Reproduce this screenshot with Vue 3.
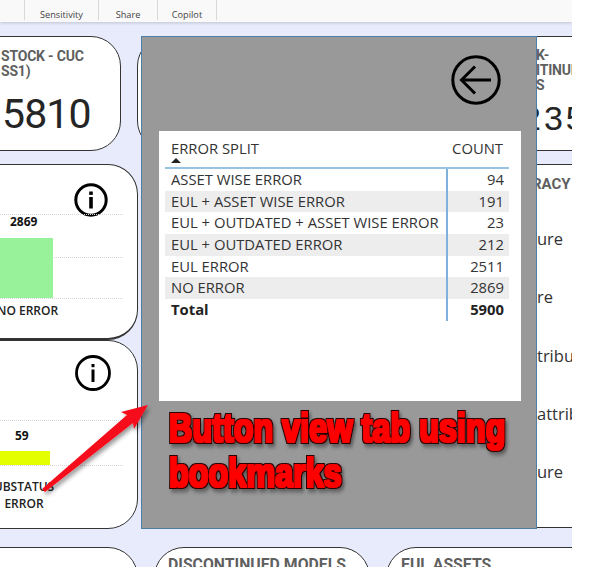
<script setup>
const rows = [
  ['ASSET WISE ERROR', 94],
  ['EUL + ASSET WISE ERROR', 191],
  ['EUL + OUTDATED + ASSET WISE ERROR', 23],
  ['EUL + OUTDATED ERROR', 212],
  ['EUL ERROR', 2511],
  ['NO ERROR', 2869]
]
const tabs = ['Sensitivity', 'Share', 'Copilot']
const fragments = ['ure', 're', 'tribu', 'attrib', 'ure']
</script>

<template>
  <div class="page">
    <div class="canvas">
      <header class="ribbon">
        <div class="tab stub"></div>
        <div v-for="t in tabs" :key="t" class="tab">{{ t }}</div>
      </header>

      <main class="board">
        <section class="row top">
          <div class="card kpi kpi-left">
            <div class="kpi-title">STOCK - CUC<br />SS1)</div>
            <div class="kpi-value">5810</div>
          </div>
          <div class="card kpi kpi-mid"></div>
          <div class="card kpi kpi-right">
            <div class="kpi-title">K-<br />ITINUE<br />S</div>
            <div class="kpi-value small">235</div>
          </div>
        </section>

        <section class="row middle">
          <div class="left-col">
            <div class="card chart chart-a">
              <svg class="info" viewBox="0 0 34 34" width="34" height="34">
                <circle cx="17" cy="17" r="15.2" fill="none" stroke="#000" stroke-width="3" />
                <rect x="15.2" y="8.5" width="3.6" height="3.4" fill="#000" />
                <rect x="15.2" y="14" width="3.6" height="11.5" fill="#000" />
              </svg>
              <div class="grid-line g1"></div>
              <div class="grid-line g2"></div>
              <div class="grid-line g3"></div>
              <div class="bar-value v1">2869</div>
              <div class="bar green"></div>
              <div class="axis a1">NO ERROR</div>
            </div>
            <div class="card chart chart-b">
              <svg class="info" viewBox="0 0 36 36" width="36" height="36">
                <circle cx="18" cy="18" r="16.5" fill="none" stroke="#000" stroke-width="2.8" />
                <rect x="16.5" y="9" width="3" height="3.2" fill="#000" />
                <rect x="16.5" y="14.5" width="3" height="12.5" fill="#000" />
              </svg>
              <div class="grid-line g4"></div>
              <div class="grid-line g5"></div>
              <div class="bar-value v2">59</div>
              <div class="bar yellow"></div>
              <div class="axis a2">UBSTATUS<br />ERROR</div>
            </div>
          </div>
          <div class="right-panel">
            <div class="panel-title">RACY</div>
            <div v-for="(f, i) in fragments" :key="i" class="panel-line">{{ f }}</div>
          </div>
        </section>

        <section class="row bottom">
          <div class="card low low-a"></div>
          <div class="card low low-b">DISCONTINUED MODELS</div>
          <div class="card low low-c">EUL ASSETS</div>
        </section>
      </main>
    </div>

    <div class="overlay">
      <div class="back">
        <svg viewBox="0 0 50 50" width="50" height="50">
          <circle cx="25" cy="25" r="23.2" fill="none" stroke="#000" stroke-width="3" />
          <path d="M40 25H10.5M24 11.5L10.5 25L24 38.5" fill="none" stroke="#000" stroke-width="3" />
        </svg>
      </div>
      <div class="table-box">
        <div class="thead">
          <div class="th-name">ERROR SPLIT<span class="sort"></span></div>
          <div class="th-count">COUNT</div>
        </div>
        <div class="tbody">
          <div v-for="r in rows" :key="r[0]" class="tr">
            <div class="td-name">{{ r[0] }}</div>
            <div class="td-count">{{ r[1] }}</div>
          </div>
          <div class="tr total">
            <div class="td-name">Total</div>
            <div class="td-count">5900</div>
          </div>
        </div>
      </div>
      <div class="callout">Button view tab using<br />bookmarks</div>
    </div>

    <svg class="arrow" width="608" height="567" viewBox="0 0 608 567">
      <defs>
        <filter id="arrow-shadow" x="-20%" y="-20%" width="140%" height="140%">
          <feDropShadow dx="2" dy="3" stdDeviation="2" flood-color="#000" flood-opacity="0.4" />
        </filter>
        <filter id="heavy-type" x="-5%" y="-15%" width="110%" height="135%">
          <feMorphology in="SourceAlpha" operator="dilate" radius="1.1 0.5" result="core" />
          <feFlood flood-color="#ff0000" />
          <feComposite in2="core" operator="in" result="red" />
          <feMorphology in="SourceAlpha" operator="dilate" radius="2.2 1.6" result="edge" />
          <feFlood flood-color="#2a0000" />
          <feComposite in2="edge" operator="in" result="dark" />
          <feOffset in="edge" dx="3" dy="3" result="moved" />
          <feGaussianBlur in="moved" stdDeviation="2" result="soft" />
          <feFlood flood-color="#000" flood-opacity="0.4" />
          <feComposite in2="soft" operator="in" result="shadow" />
          <feMerge>
            <feMergeNode in="shadow" />
            <feMergeNode in="dark" />
            <feMergeNode in="red" />
          </feMerge>
        </filter>
      </defs>
      <polygon points="42,489 127,415 121,412 148,405 134,429 133,423 45,492" fill="#f5101c" filter="url(#arrow-shadow)" />
    </svg>
  </div>
</template>

<style>
html, body { margin: 0; background: #fff; }
</style>

<style scoped>
.page {
  position: relative;
  width: 608px;
  height: 567px;
  overflow: hidden;
  background: #fff;
  font-family: "Open Sans", "Noto Sans", sans-serif;
}
.canvas {
  width: 572px;
  height: 567px;
  overflow: hidden;
  background: #e8ebfb;
}
.ribbon {
  display: flex;
  height: 22px;
  background: #f9f9f9;
  box-shadow: 0 1px 3px rgba(0, 0, 0, 0.18);
}
.tab {
  box-sizing: border-box;
  height: 20px;
  padding-top: 9px;
  border-right: 1px solid #d8d8d8;
  font-size: 9.2px;
  line-height: 12px;
  color: #444;
  text-align: center;
}
.tab.stub { width: 25px; }
.tab:nth-child(2) { width: 74px; }
.tab:nth-child(3), .tab:nth-child(4) { width: 59px; }
.board {
  display: flex;
  flex-direction: column;
  padding-top: 14px;
}
.row { display: flex; }
.card {
  box-sizing: border-box;
  flex: none;
  background: #fff;
  border: 1px solid #333;
  border-radius: 30px;
}
.top { height: 115px; margin-left: -60px; }
.kpi-left { width: 181px; padding: 12px 0 0 60px; }
.kpi-mid { width: 100px; margin-left: 16px; }
.kpi-right {
  width: 200px;
  margin-left: 298px;
  border-radius: 0;
  border-left: 0;
  padding: 11px 0 0 1px;
}
.kpi-title {
  font-family: Roboto, "Liberation Sans", sans-serif;
  font-weight: 700;
  font-size: 14px;
  line-height: 15px;
  letter-spacing: -0.2px;
  color: #5f5f5f;
}
.kpi-value {
  font-family: Roboto, "Liberation Sans", sans-serif;
  font-size: 41px;
  line-height: 44px;
  letter-spacing: -0.9px;
  color: #252525;
  margin: 13px 0 0 1px;
}
.kpi-value.small {
  font-family: "Liberation Sans", sans-serif;
  font-size: 34px;
  letter-spacing: 3px;
  margin: 0 0 0 -14px;
  padding-top: 3px;
}
.middle { height: 365px; margin-top: 13px; margin-left: -60px; }
.left-col { display: flex; flex-direction: column; width: 198px; flex: none; }
.chart { position: relative; width: 198px; }
.chart-a { height: 176px; border-bottom-width: 2px; }
.chart-b { height: 189px; }
.info { position: absolute; }
.chart-a .info { left: 133px; top: 18px; }
.chart-b .info { left: 134px; top: 14px; }
.grid-line {
  position: absolute;
  left: 40px;
  right: 14px;
  border-top: 1px dotted #d6d6d6;
}
.g1 { top: 49px; }
.g2 { top: 92px; }
.g3 { top: 133px; }
.g4 { top: 79px; }
.g5 { top: 124px; }
.bar { position: absolute; left: 40px; }
.green { top: 73px; width: 72px; height: 60px; background: #98f29a; }
.yellow { top: 110px; width: 69px; height: 14px; background: #e3ff00; }
.bar-value {
  position: absolute;
  font-size: 12px;
  font-weight: 700;
  line-height: 16px;
  color: #111;
}
.v1 { left: 69px; top: 49px; }
.v2 { left: 74px; top: 87px; }
.axis {
  position: absolute;
  font-size: 12px;
  font-weight: 600;
  line-height: 17px;
  color: #222;
  text-align: center;
  white-space: nowrap;
}
.a1 { left: 56px; top: 137px; }
.a2 { left: 43px; top: 137px; width: 80px; }
.right-panel {
  box-sizing: border-box;
  flex: none;
  width: 180px;
  margin-left: 399px;
  padding: 11px 0 0 0;
  background: #fff;
  border-top: 1px solid #333;
  border-bottom: 1px solid #333;
  height: 364px;
  font-size: 16.5px;
  color: #333;
}
.panel-title {
  font-family: Roboto, "Liberation Sans", sans-serif;
  font-weight: 700;
  font-size: 15px;
  line-height: 16px;
  color: #5f5f5f;
  margin: 0 0 35px -5px;
}
.panel-line { height: 58.25px; line-height: 24px; }
.bottom { margin-top: 18px; margin-left: -60px; height: 60px; }
.low { height: 60px; }
.low-a { width: 198px; }
.low-b {
  width: 216px;
  margin-left: 16px;
  padding: 9px 0 0 13px;
}
.low-c {
  width: 240px;
  margin-left: 16px;
  padding: 9px 0 0 14px;
}
.low-b, .low-c {
  font-family: Roboto, "Liberation Sans", sans-serif;
  font-weight: 700;
  font-size: 15.8px;
  line-height: 16px;
  color: #5f5f5f;
}
.overlay {
  position: absolute;
  left: 141px;
  top: 36px;
  box-sizing: border-box;
  width: 396px;
  height: 493px;
  background: #999;
  border: 1px solid #4d7ea8;
  display: flex;
  flex-direction: column;
}
.back {
  height: 94px;
  padding: 18px 0 0 309px;
  box-sizing: border-box;
}
.back svg { display: block; }
.table-box {
  box-sizing: border-box;
  width: 362px;
  height: 270px;
  margin-left: 17px;
  background: #fff;
  padding: 0 12px 0 6px;
  color: #333;
  font-size: 14.8px;
}
.thead {
  display: flex;
  justify-content: space-between;
  height: 38px;
  padding: 7px 6px 0 6px;
  box-sizing: border-box;
  border-bottom: 2px solid #97c4e3;
  line-height: 20px;
}
.th-name { position: relative; }
.sort {
  position: absolute;
  left: 0;
  top: 20px;
  border-left: 5px solid transparent;
  border-right: 5px solid transparent;
  border-bottom: 5px solid #222;
}
.tr {
  display: flex;
  height: 21.7px;
  line-height: 21.7px;
}
.tr:nth-child(even) { background: #eeedee; }
.td-name { width: 281px; padding-left: 6px; box-sizing: border-box; white-space: nowrap; }
.td-count {
  box-sizing: border-box;
  width: 63px;
  padding-right: 5px;
  text-align: right;
  border-left: 2px solid #7fb1dc;
}
.total { font-weight: 700; color: #222; }
.callout {
  margin: 5px 0 0 27px;
  font-family: "Liberation Sans", sans-serif;
  font-weight: 700;
  font-size: 40px;
  line-height: 45px;
  white-space: nowrap;
  color: #f00;
  width: 420px;
  transform: scaleX(0.81);
  transform-origin: left top;
  filter: url(#heavy-type);
}
.arrow {
  position: absolute;
  left: 0;
  top: 0;
  pointer-events: none;
}
</style>
